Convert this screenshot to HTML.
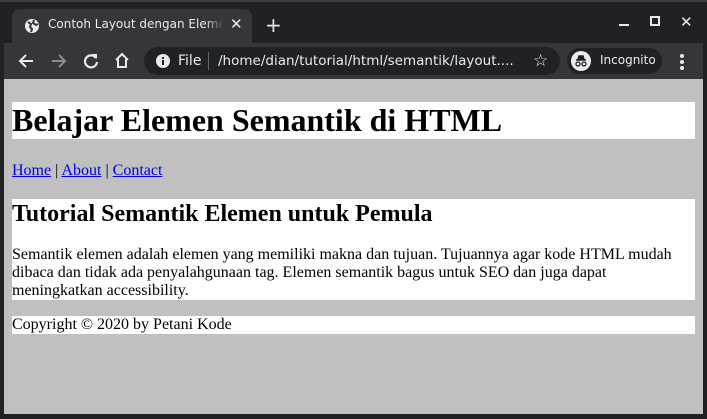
<!DOCTYPE html>
<html><head><meta charset="utf-8"><style>
*{margin:0;padding:0;box-sizing:border-box}
body{width:707px;height:419px;overflow:hidden;background:#202124;position:relative;font-family:"Liberation Sans",sans-serif}
.ui{font-family:"DejaVu Sans","Liberation Sans",sans-serif;color:#e8eaed;font-size:13px;position:absolute;white-space:nowrap}
#tab{position:absolute;left:12px;top:9px;width:240px;height:34px;background:#35363a;border-radius:8px 8px 0 0}
#toolbar{position:absolute;left:4px;top:43px;width:699px;height:36px;background:#35363a}
#omni{position:absolute;left:144px;top:47px;width:416px;height:28px;background:#202124;border-radius:14px}
#inc{position:absolute;left:567px;top:48px;width:95px;height:26px;background:#202124;border-radius:13px}
#page{position:absolute;left:4px;top:79px;width:699px;height:335px;background:#c0c0c0;font-family:"Liberation Serif",serif;color:#000}
.band{position:absolute;left:8px;width:683px;background:#fff}
a{color:#0000ee;text-decoration:underline}
</style></head><body>
<div style="position:absolute;left:0;top:0;width:707px;height:2px;background:#3c3c3c"></div>
<div id="tab"></div>
<svg style="position:absolute;left:24px;top:18px" width="16" height="16" viewBox="0 0 16 16"><circle cx="8" cy="8" r="7" fill="#e8eaed"/><path d="M4 4 L7 6 L6 9 L8 11 L7 14 M10 2 L9 5 L12 7 L14 6" stroke="#35363a" stroke-width="2" fill="none"/></svg>
<div style="position:absolute;left:48px;top:9px;width:175px;height:30px;overflow:hidden"><div class="ui" style="left:0;top:8px;font-size:12px">Contoh Layout dengan Elemen Semantik</div></div>
<div style="position:absolute;left:205px;top:12px;width:19px;height:28px;background:linear-gradient(90deg,rgba(53,54,58,0),#35363a)"></div>
<div class="ui" style="left:230px;top:15px;font-size:15px">✕</div>
<div class="ui" style="left:265px;top:13px;font-size:20px">+</div>
<div style="position:absolute;left:619px;top:24px;width:10px;height:2px;background:#e8eaed"></div>
<div style="position:absolute;left:650px;top:16px;width:10px;height:10px;border:2px solid #e8eaed"></div>
<div class="ui" style="left:680px;top:13px;font-size:15px">✕</div>
<div id="toolbar"></div>
<svg style="position:absolute;left:17px;top:52px" width="18" height="18" viewBox="0 0 18 18"><path d="M16 9H3M9 3L3 9l6 6" stroke="#e8eaed" stroke-width="2" fill="none"/></svg>
<svg style="position:absolute;left:50px;top:52px" width="18" height="18" viewBox="0 0 18 18"><path d="M2 9h13M9 3l6 6-6 6" stroke="#8a8b8e" stroke-width="2" fill="none"/></svg>
<svg style="position:absolute;left:82px;top:52px" width="18" height="18" viewBox="0 0 18 18"><path d="M14 6A6 6 0 1 0 15 10" stroke="#e8eaed" stroke-width="2.2" fill="none"/><path d="M10 2h5v5z" fill="#e8eaed"/></svg>
<svg style="position:absolute;left:113px;top:51px" width="18" height="18" viewBox="0 0 18 18"><path d="M3 9L9 3l6 6M5 8v8h8V8" stroke="#e8eaed" stroke-width="2" fill="none"/></svg>
<div id="omni"></div>
<svg style="position:absolute;left:155px;top:53px" width="16" height="16" viewBox="0 0 16 16"><circle cx="8" cy="8" r="7" fill="#e8eaed"/><rect x="7" y="7" width="2" height="5" fill="#202124"/><rect x="7" y="4" width="2" height="2" fill="#202124"/></svg>
<div class="ui" style="left:178px;top:53px;font-size:14px">File</div>
<div style="position:absolute;left:208px;top:52px;width:1px;height:18px;background:#5f6368"></div>
<div class="ui" style="left:218px;top:53px;font-size:13.5px">/home/dian/tutorial/html/semantik/layout....</div>
<div class="ui" style="left:533px;top:51px;font-size:17px">☆</div>
<div id="inc"></div>
<svg style="position:absolute;left:571px;top:51px" width="20" height="20" viewBox="0 0 20 20"><circle cx="10" cy="10" r="10" fill="#e8eaed"/><path d="M5 9h10M7 9l1-4h4l1 4" stroke="#202124" stroke-width="1.6" fill="#202124"/><circle cx="7" cy="13" r="2" stroke="#202124" fill="none" stroke-width="1.3"/><circle cx="13" cy="13" r="2" stroke="#202124" fill="none" stroke-width="1.3"/></svg>
<div class="ui" style="left:600px;top:53px;font-size:12px">Incognito</div>
<div style="position:absolute;left:680px;top:54px;width:4px;height:4px;border-radius:2px;background:#e8eaed;box-shadow:0 6px 0 #e8eaed,0 12px 0 #e8eaed"></div>
<div id="page">
<div class="band" style="top:23px;height:37px"></div>
<div style="position:absolute;left:8px;top:22px;font-size:32px;font-weight:bold;line-height:38px">Belajar Elemen Semantik di HTML</div>
<div style="position:absolute;left:8px;top:82px;font-size:16px;line-height:20px"><a>Home</a> | <a>About</a> | <a>Contact</a></div>
<div class="band" style="top:120px;height:101px"></div>
<div style="position:absolute;left:8px;top:121px;font-size:24px;font-weight:bold;line-height:28px">Tutorial Semantik Elemen untuk Pemula</div>
<div style="position:absolute;left:8px;top:167px;width:683px;font-size:16px;line-height:18px">Semantik elemen adalah elemen yang memiliki makna dan tujuan. Tujuannya agar kode HTML mudah dibaca dan tidak ada penyalahgunaan tag. Elemen semantik bagus untuk SEO dan juga dapat meningkatkan accessibility.</div>
<div class="band" style="top:237px;height:18px"></div>
<div style="position:absolute;left:8px;top:237px;font-size:16px;line-height:18px">Copyright © 2020 by Petani Kode</div>
</div>
</body></html>
